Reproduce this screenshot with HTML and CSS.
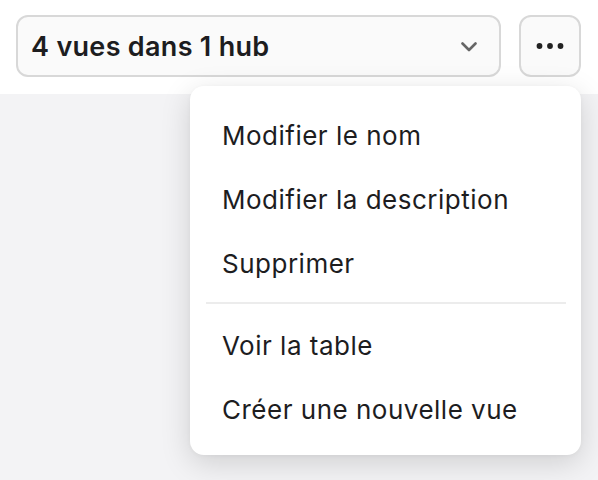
FILE: index.html
```html
<!DOCTYPE html>
<html lang="fr">
<head>
<meta charset="utf-8">
<link rel="stylesheet" href="styles.css">
</head>
<body>
<header class="toolbar">
  <button class="select">
    <span class="select-label">4 vues dans 1 hub</span>
    <svg class="chevron" width="16" height="10" viewBox="0 0 16 10"><path d="M1.5 1.5 L8 8 L14.5 1.5" fill="none" stroke="#666" stroke-width="2.6" stroke-linecap="round" stroke-linejoin="round"/></svg>
  </button>
  <button class="more">
    <svg width="28" height="8" viewBox="0 0 28 8"><circle cx="3.5" cy="4" r="2.9" fill="#222"/><circle cx="14" cy="4" r="2.9" fill="#222"/><circle cx="24.5" cy="4" r="2.9" fill="#222"/></svg>
  </button>
</header>
<main class="content"></main>
<div class="menu">
  <div class="item">Modifier le nom</div>
  <div class="item">Modifier la description</div>
  <div class="item">Supprimer</div>
  <div class="sep"></div>
  <div class="item">Voir la table</div>
  <div class="item">Créer une nouvelle vue</div>
</div>
</body>
</html>
```

FILE: styles.css
```css
html, body {
  margin: 0;
  height: 100%;
}
body {
  background: #f3f3f5;
  font-family: Inter, "Noto Sans", sans-serif;
  color: #1d1d1f;
  overflow: hidden;
}
.toolbar {
  background: #fff;
  height: 94px;
  box-sizing: border-box;
  padding: 15px 17px 0 16px;
  display: flex;
  gap: 18px;
  align-items: flex-start;
}
button {
  font-family: inherit;
  margin: 0;
}
.select {
  width: 485px;
  height: 62px;
  box-sizing: border-box;
  border: 2px solid #d8d8d8;
  border-radius: 12px;
  background: #fafafa;
  display: flex;
  align-items: center;
  justify-content: space-between;
  padding: 0 22px 0 13px;
}
.select-label {
  font-size: 27px;
  font-weight: 600;
  color: #1d1d1f;
  letter-spacing: 0.3px;
  margin-top: 1px;
}
.chevron {
  margin-top: 2px;
}
.more {
  width: 62px;
  height: 62px;
  box-sizing: border-box;
  border: 2px solid #d8d8d8;
  border-radius: 12px;
  background: #fafafa;
  display: flex;
  align-items: center;
  justify-content: center;
  padding: 0;
}
.menu {
  position: absolute;
  left: 190px;
  top: 86px;
  width: 391px;
  box-sizing: border-box;
  background: #fff;
  border-radius: 14px;
  box-shadow: 0 8px 30px rgba(0, 0, 0, 0.15), 0 1px 4px rgba(0, 0, 0, 0.04);
  padding: 16px 0 15px;
}
.item {
  height: 64px;
  display: flex;
  align-items: center;
  padding-left: 32px;
  padding-top: 2px;
  box-sizing: border-box;
  font-size: 26px;
  letter-spacing: 0.5px;
  color: #1d1d1f;
}
.sep {
  height: 2px;
  background: #ececec;
  margin: 8px 15px 8px 16px;
}
```
